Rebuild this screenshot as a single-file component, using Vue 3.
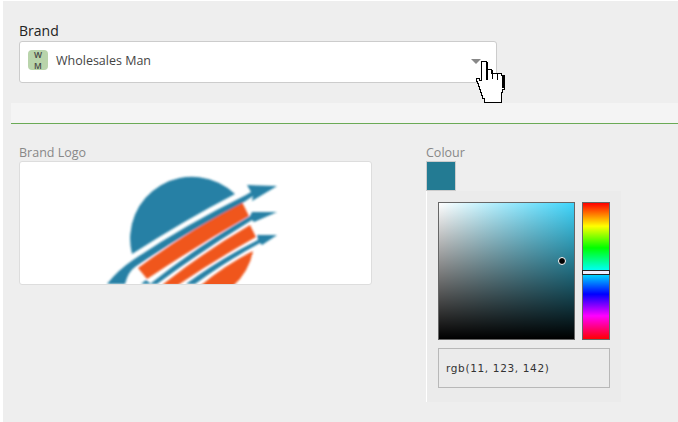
<script setup>
const squareBg = 'linear-gradient(to top, #000, rgba(0,0,0,0)), linear-gradient(to right, #fff, rgba(255,255,255,0))'
</script>

<template>
  <div class="page">
    <section class="brand">
      <label class="brand-label">Brand</label>
      <div class="select">
        <span class="badge">W<br />M</span>
        <span class="select-text">Wholesales Man</span>
        <span class="caret"></span>
        <svg class="cursor" width="32" height="44" viewBox="0 0 32 44" shape-rendering="crispEdges">
          <path d="M7.500 1.500h5v8h5v3.500h5v.5h5v1.500h2.500v14h-2v3.500h-1v10H10.500v-4h-2v-3h-1v-3h-1v-3h-1v-3h-1v-3h-1v-2h-1v-3H5.500v2h2z" fill="#fff" stroke="#000" stroke-width="1" />
          <path d="M13 2v18" fill="none" stroke="#000" stroke-width="2" />
          <path d="M18.500 10v9M23.500 14v6" fill="none" stroke="#000" stroke-width="1" />
          <path d="M29 15v13" fill="none" stroke="#000" stroke-width="2" />
        </svg>
      </div>
    </section>
    <div class="band"></div>
    <section class="details">
      <div class="logo-col">
        <label class="muted">Brand Logo</label>
        <div class="logo-box">
          <svg class="logo" width="351" height="122" viewBox="0 0 351 122">
            <defs>
              <filter id="soft" x="-5%" y="-5%" width="110%" height="110%"><feGaussianBlur stdDeviation="0.8" /></filter>
            </defs>
            <g filter="url(#soft)">
              <path d="M112 92 A62 62 0 0 1 215 32 Q165 58 112 92z" fill="#2580a5" />
              <path d="M233 89 A62 62 0 0 1 213 124 L180 124 Q205 103 233 89z" fill="#f0561f" />
              <path d="M118 106 Q165 71 222 40 L229 54 Q178 83 127 117z" fill="#f0561f" />
              <path d="M142 123 Q185 89 230 63 L236 75 Q195 98 158 123z" fill="#f0561f" />
              <path d="M87 122 Q98 108 113 98 Q165 63 226 33 L231 30 L227 23 L257 24 L232 39 L233 34 L224 40 Q168 69 115 105 Q108 110 105 122z" fill="#2580a5" />
              <path d="M121 122 L126 118 L131 122z" fill="#2580a5" />
              <path d="M130 122 Q175 86 230 54 L232 50 L257 50 L234 60 L232 58 Q180 90 137 122z" fill="#2580a5" />
              <path d="M166 122 Q200 97 238 78 L237 73 L257 73 L242 83 L240 81 Q205 100 175 122z" fill="#2580a5" />
            </g>
          </svg>
        </div>
      </div>
      <div class="colour-col">
        <label class="muted">Colour</label>
        <div class="swatch"></div>
        <div class="picker">
          <div class="picker-top">
            <div class="square" :style="{ backgroundImage: squareBg }">
              <span class="dot"></span>
            </div>
            <div class="hue">
              <span class="hue-handle"></span>
            </div>
          </div>
          <div class="value">rgb(11, 123, 142)</div>
        </div>
      </div>
    </section>
  </div>
</template>

<style>
html, body { margin: 0; background: #fff; }
</style>

<style scoped>
.page {
  width: 675px;
  height: 421px;
  margin-left: 3px;
  padding-top: 1px;
  background: #eee;
  background-clip: content-box;
  font-family: "Open Sans", sans-serif;
  overflow: hidden;
  box-sizing: content-box;
}
.brand {
  padding: 20px 0 0 16px;
  height: 102px;
  box-sizing: border-box;
}
.brand-label {
  display: block;
  font-size: 14px;
  line-height: 20px;
  color: #222;
}
.select {
  position: relative;
  display: flex;
  align-items: center;
  width: 478px;
  height: 42px;
  box-sizing: border-box;
  padding: 0 0 4px 8px;
  background: #fff;
  border: 1px solid #ccc;
  border-radius: 3px;
}
.badge {
  width: 20px;
  height: 20px;
  border-radius: 4px;
  background: #b9d4ab;
  color: #444;
  font-size: 8.500px;
  font-weight: 600;
  line-height: 10.500px;
  text-align: center;
}
.select-text {
  margin-left: 8px;
  font-size: 12.500px;
  color: #444;
}
.caret {
  position: absolute;
  right: 15px;
  top: 17px;
  border: 5px solid transparent;
  border-top: 5px solid #888;
}
.cursor {
  position: absolute;
  left: 454px;
  top: 18px;
}
.band {
  height: 20px;
  margin-left: 8px;
  background: #f4f4f4;
  border-bottom: 1px solid #6aaa55;
}
.details {
  display: flex;
  padding: 20px 0 0 16px;
}
.logo-col { width: 407px; }
.muted {
  display: block;
  font-size: 12.500px;
  line-height: 17px;
  color: #888;
}
.logo-box {
  width: 353px;
  height: 124px;
  box-sizing: border-box;
  border: 1px solid #ddd;
  border-radius: 3px;
  background: #fff;
  overflow: hidden;
}
.logo { display: block; }
.swatch {
  width: 30px;
  height: 30px;
  box-sizing: border-box;
  background: #237b93;
  border: 1px solid #ccc;
}
.picker {
  width: 195px;
  height: 211px;
  box-sizing: border-box;
  padding: 11px 0 0 11px;
  background: #ebebeb;
  border-left: 1px solid #fff;
}
.picker-top {
  display: flex;
  gap: 7px;
}
.square {
  position: relative;
  flex: none;
  width: 137px;
  height: 138px;
  box-sizing: border-box;
  border: 1px solid #666;
  background-color: #3fd5fb;
}
.dot {
  position: absolute;
  left: 119px;
  top: 54px;
  width: 6px;
  height: 6px;
  background: #000;
  border: 1px solid #fff;
  border-radius: 50%;
}
.hue {
  position: relative;
  flex: none;
  width: 28px;
  height: 138px;
  box-sizing: border-box;
  border: 1px solid #666;
  background: linear-gradient(to bottom, #f00, #ff0 17%, #0f0 33%, #0ff 50%, #00f 67%, #f0f 83%, #f00);
}
.hue-handle {
  position: absolute;
  left: -1px;
  right: -1px;
  top: 67px;
  height: 5px;
  box-sizing: border-box;
  background: #eef;
  border: 1px solid #222;
}
.value {
  width: 172px;
  height: 40px;
  margin-top: 8px;
  box-sizing: border-box;
  padding-left: 7px;
  border: 1px solid #b8b8b8;
  font-family: "DejaVu Sans", sans-serif;
  font-size: 10.500px;
  letter-spacing: 0.650px;
  line-height: 38px;
  color: #333;
}
</style>
